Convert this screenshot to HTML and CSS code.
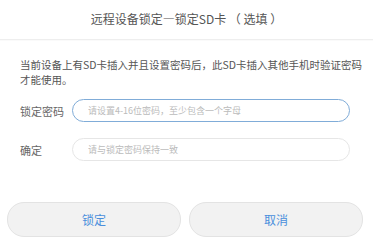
FILE: index.html
```html
<!DOCTYPE html>
<html lang="zh-CN">
<head>
<meta charset="utf-8">
<title>锁定SD卡</title>
<link rel="stylesheet" href="styles.css">
</head>
<body>
<div class="page">
  <div class="header">远程设备锁定—锁定SD卡 （ 选填 ）</div>
  <p class="desc">当前设备上有SD卡插入并且设置密码后，此SD卡插入其他手机时验证密码才能使用。</p>
  <div class="form">
    <div class="row">
      <label class="label">锁定密码</label>
      <input class="field field-active" type="password" placeholder="请设置4-16位密码，至少包含一个字母">
    </div>
    <div class="row">
      <label class="label">确定</label>
      <input class="field" type="password" placeholder="请与锁定密码保持一致">
    </div>
  </div>
  <div class="actions">
    <button class="btn">锁定</button>
    <button class="btn">取消</button>
  </div>
</div>
</body>
</html>
```
FILE: styles.css
```css
html, body {
  margin: 0;
  padding: 0;
  background: #ffffff;
}
body {
  font-family: "Noto Sans CJK SC", "Noto Sans", sans-serif;
  width: 373px;
  height: 246px;
  overflow: hidden;
}
.page {
  display: flex;
  flex-direction: column;
}
.header {
  height: 39px;
  line-height: 37px;
  text-align: center;
  font-size: 12px;
  color: #555555;
  border-bottom: 1px solid #eeeeee;
  box-shadow: 0 1px 1px rgba(0,0,0,0.02);
}
.desc {
  margin: 17px 0 0 0;
  padding: 0 5px 0 20px;
  font-size: 10.5px;
  line-height: 15px;
  color: #555555;
}
.form {
  margin-top: 12px;
  display: flex;
  flex-direction: column;
  gap: 16px;
  padding: 0 23px 0 20px;
}
.row {
  display: flex;
  align-items: center;
}
.label {
  width: 52px;
  font-size: 11px;
  color: #666666;
}
.field {
  flex: 1;
  box-sizing: border-box;
  height: 23px;
  margin: 0;
  padding: 0 0 0 15px;
  border: 1px solid #e6e6e6;
  border-radius: 12px;
  font-family: "Noto Sans CJK SC", "Noto Sans", sans-serif;
  font-size: 9px;
  color: #555555;
  background: #ffffff;
  outline: none;
}
.field-active {
  border-color: #80acd8;
}
.field::placeholder {
  color: #bbbbbb;
}
.actions {
  margin-top: 41px;
  display: flex;
  gap: 8px;
  padding: 0 10px 0 7px;
}
.btn {
  flex: 1;
  height: 35px;
  box-sizing: border-box;
  border: 1px solid #e3e3e3;
  border-radius: 17px;
  background: #f2f2f2;
  color: #4a8fdc;
  font-family: "Noto Sans CJK SC", "Noto Sans", sans-serif;
  font-size: 12px;
  padding: 0;
}
```
